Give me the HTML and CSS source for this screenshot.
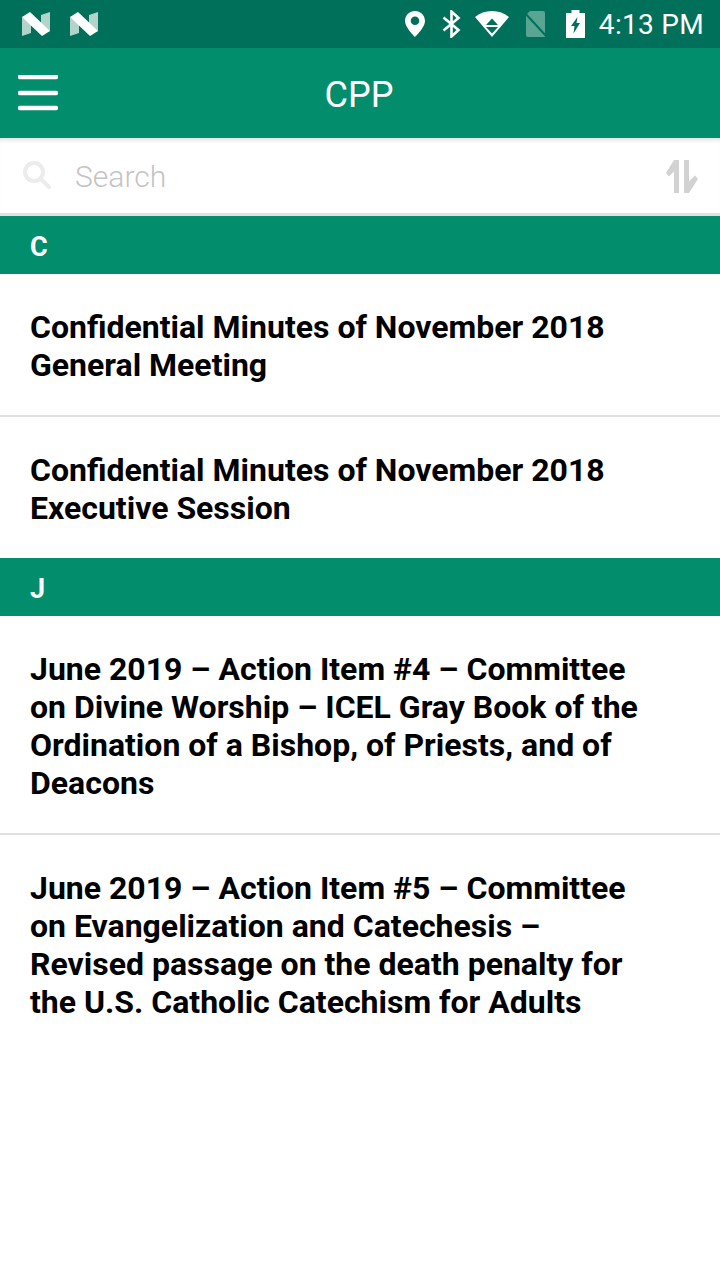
FILE: index.html
```html
<!DOCTYPE html>
<html lang="en">
<head>
<meta charset="utf-8">
<title>CPP</title>
<link rel="stylesheet" href="styles.css">
</head>
<body>
<div class="status">
  <div class="status-left">
    <svg class="n" viewBox="0 0 28 24"><path class="dim" d="M0 5 9 3V21L0 24Z"/><path class="dim" d="M19 3 28 0V19L19 22Z"/><path class="lit" d="M0 5 8 0 28 19 20 24Z"/></svg>
    <svg class="n" viewBox="0 0 28 24"><path class="dim" d="M0 5 9 3V21L0 24Z"/><path class="dim" d="M19 3 28 0V19L19 22Z"/><path class="lit" d="M0 5 8 0 28 19 20 24Z"/></svg>
  </div>
  <div class="status-right">
    <svg class="i-pin" viewBox="0 0 20 26"><path fill-rule="evenodd" d="M10 0C4.500 0 0 4.300 0 10C0 16.500 10 26 10 26S20 16.500 20 10C20 4.300 15.500 0 10 0ZM10 5.500A4.300 4.300 0 1 1 10 14.100 4.300 4.300 0 0 1 10 5.500Z"/></svg>
    <svg class="i-bt" viewBox="0 0 19 28"><path d="M1.500 7.500 16.500 20 9.500 26.500V1.500L16.500 8 1.500 20.500"/></svg>
    <svg class="i-wifi" viewBox="0 0 34 26"><path fill-rule="evenodd" d="M0 6C4.500 2 10.500 0 17 0S29.500 2 34 6L17 26ZM17 7.500 11 14H23ZM11 16 17 22.500 23 16Z"/></svg>
    <svg class="i-sim" viewBox="0 0 25 27"><path class="sim-body" d="M7 0H20A2 2 0 0 1 22 2V26H5A2 2 0 0 1 3 24V4Z"/><path class="sim-line" d="M1 1 24 26"/></svg>
    <svg class="i-bat" viewBox="0 0 19 28"><path fill-rule="evenodd" d="M5.500 0H13.500V3H19V28H0V3H5.500ZM11.500 7 5 16H8.500L7.500 23.500 14 13H10.500Z"/></svg>
    <span class="time">4:13 PM</span>
  </div>
</div>
<header class="appbar">
  <svg class="menu" viewBox="0 0 40 36"><path d="M2 2H38M2 18H38M2 33H38"/></svg>
  <h1 class="title">CPP</h1>
</header>
<div class="searchbar">
  <svg class="i-search" viewBox="0 0 28 28"><circle cx="11" cy="11" r="9"/><path d="M18 18 26 26"/></svg>
  <span class="placeholder">Search</span>
  <svg class="i-sort" viewBox="0 0 32 33"><path d="M8 0H13V33H8V11.500L3 16.500 0 13Z"/><path d="M18 0H23V21.500L29 15.500 32 19 23 33H18Z"/></svg>
</div>
<main class="list">
  <div class="section">C</div>
  <div class="item">Confidential Minutes of November 2018 General Meeting</div>
  <div class="item last">Confidential Minutes of November 2018 Executive Session</div>
  <div class="section">J</div>
  <div class="item">June 2019 – Action Item #4 – Committee on Divine Worship – ICEL Gray Book of the Ordination of a Bishop, of Priests, and of Deacons</div>
  <div class="item last">June 2019 – Action Item #5 – Committee on Evangelization and Catechesis – Revised passage on the death penalty for the U.S. Catholic Catechism for Adults</div>
</main>
</body>
</html>
```
FILE: styles.css
```css
* { box-sizing: border-box; }
html, body { margin: 0; padding: 0; background: #fff; }
body { width: 720px; height: 1280px; overflow: hidden; font-family: Roboto, "Liberation Sans", sans-serif; }

.status { height: 48px; background: #00705a; display: flex; align-items: center; justify-content: space-between; padding: 0 16px 0 22px; }
.status-left { display: flex; gap: 20px; }
.n { width: 28px; height: 24px; display: block; }
.n .dim { fill: #b2d4cb; }
.n .lit { fill: #fff; }
.status-right { display: flex; align-items: center; color: #fff; }
.status-right svg { display: block; fill: #fff; }
.i-pin { width: 20px; height: 26px; margin-right: 17px; }
.i-bt { width: 19px; height: 28px; margin-right: 14px; }
.status-right .i-bt path { fill: none; stroke: #fff; stroke-width: 2.600; }
.i-wifi { width: 34px; height: 26px; margin-right: 14px; }
.i-sim { width: 25px; height: 27px; margin-right: 18px; }
.status-right .i-sim .sim-body { fill: #5aa592; }
.status-right .i-sim .sim-line { stroke: #00705a; stroke-width: 2; fill: none; }
.i-bat { width: 19px; height: 28px; margin-right: 14px; }
.time { font-size: 28px; line-height: 48px; letter-spacing: 0.3px; margin-top: 2px; }

.appbar { position: relative; height: 90px; background: #028e6d; display: flex; align-items: center; justify-content: center; }
.menu { position: absolute; left: 18px; top: 27px; width: 40px; height: 36px; fill: none; stroke: #fff; stroke-width: 4.500; stroke-linecap: round; }
.title { margin: 4px 2px 0 0; font-size: 36px; font-weight: 400; color: #fff; }

.searchbar { height: 78px; background: #fff; border-bottom: 3px solid #e2e2e2; display: flex; align-items: center; padding: 2px 22px 0 23px; box-shadow: inset 0 5px 4px -3px #e0e0e0; }
.i-search { width: 28px; height: 28px; fill: none; stroke: #ececec; stroke-width: 4; stroke-linecap: round; margin-top: -4px; }
.placeholder { margin-left: 24px; font-size: 30px; font-weight: 300; color: #c4c4c4; flex: 1; }
.i-sort { width: 32px; height: 33px; fill: #d2d2d2; }

.section { height: 58px; background: #028e6d; color: #fff; font-size: 27px; font-weight: 700; padding: 2px 0 0 30px; line-height: 58px; overflow: hidden; }
.item { padding: 34px 60px 31px 30px; border-bottom: 2px solid #e0e0e0; font-size: 32px; font-weight: 700; line-height: 38px; color: #000; }
.item.last { border-bottom: 0; }
```
